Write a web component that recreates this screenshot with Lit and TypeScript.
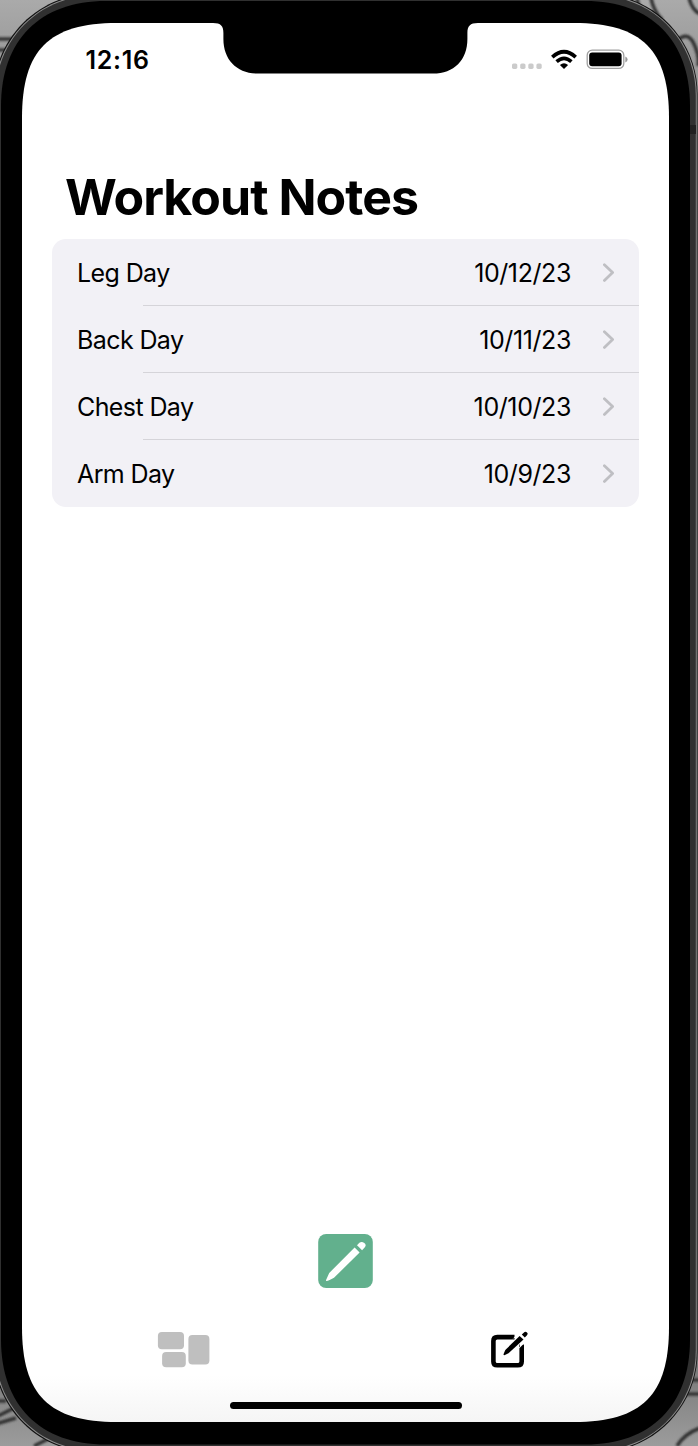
import { LitElement, html, css, svg } from "lit";
import { customElement, property } from "lit/decorators.js";

interface Note {
  title: string;
  date: string;
}

const NOTES: Note[] = [
  { title: "Leg Day", date: "10/12/23" },
  { title: "Back Day", date: "10/11/23" },
  { title: "Chest Day", date: "10/10/23" },
  { title: "Arm Day", date: "10/9/23" },
];

/** Continuous-curvature rounded rectangle: l is the corner length, a the handle inset. */
function squircle(x0: number, y0: number, x1: number, y1: number, l: number, a: number): string {
  return `M${x0} ${y0 + l}C${x0} ${y0 + a} ${x0 + a} ${y0} ${x0 + l} ${y0}H${x1 - l}
    C${x1 - a} ${y0} ${x1} ${y0 + a} ${x1} ${y0 + l}V${y1 - l}
    C${x1} ${y1 - a} ${x1 - a} ${y1} ${x1 - l} ${y1}H${x0 + l}
    C${x0 + a} ${y1} ${x0} ${y1 - a} ${x0} ${y1 - l}Z`;
}

@customElement("phone-frame")
export class PhoneFrame extends LitElement {
  static styles = css`
    :host { display: block; }
    svg { display: block; }
  `;
  render() {
    return html`<svg width="698" height="1446" viewBox="0 0 698 1446">
      <defs>
        <linearGradient id="wall" x1="0" y1="0" x2="0" y2="1">
          <stop offset="0" stop-color="#aaa" />
          <stop offset="0.04" stop-color="#9a9a9a" />
          <stop offset="0.95" stop-color="#7c7c7c" />
          <stop offset="1" stop-color="#9c9c9c" />
        </linearGradient>
        <linearGradient id="glass" x1="0" y1="1375" x2="0" y2="1422" gradientUnits="userSpaceOnUse">
          <stop offset="0" stop-color="#fff" />
          <stop offset="1" stop-color="#f5f5f5" />
        </linearGradient>
        <filter id="soft"><feGaussianBlur stdDeviation="1" /></filter>
      </defs>
      <rect width="698" height="1446" fill="url(#wall)" />
      <g fill="none" stroke="#303030" stroke-width="3.5" filter="url(#soft)">
        <path d="M-2 39H14M-2 50H10M637 -2Q638 9 646 16M651 -2Q653 10 662 20M689 -2Q692 10 700 14" />
        <path d="M678 40Q688 31 694 44T698 66M-2 1401H6M-2 1416L14 1408M-4 1424L16 1418M34 1446L50 1438" />
        <path d="M686 1380H700M682 1394H700M677 1446Q684 1434 700 1428" />
      </g>
      <path d=${squircle(-6.5, -6.5, 697.6, 1452.5, 101, 45)} fill="#111" />
      <path d=${squircle(-5.5, -5.5, 696.8, 1451.5, 100, 45)} fill="#8c8c8c" />
      <path d=${squircle(-4.5, -4.5, 695.8, 1450.5, 100, 44)} fill="#303030" />
      <path d="M690 125H696V134H690Z" fill="#202020" />
      <path d=${squircle(1, 1, 690, 1444.5, 105, 39)} fill="#000" />
      <path d=${squircle(22, 23, 669, 1422, 95, 27)} fill="url(#glass)" />
      <path d="M213 22V23C221 23 223.4 26 223.4 33V39C223.4 60 237 73.6 258 73.6H433C454 73.6 467.4 60 467.4 39V33C467.4 26 470 23 478 23V22Z" fill="#000" />
    </svg>`;
  }
}

@customElement("status-bar")
export class StatusBar extends LitElement {
  static styles = css`
    :host {
      display: flex;
      justify-content: space-between;
      align-items: center;
      height: 30px;
      padding: 22px 40px 0 63.5px;
    }
    .time {
      font: 600 25px/30px Inter, "Liberation Sans", sans-serif;
      letter-spacing: 0.7px;
    }
    svg { display: block; margin-bottom: 2px; }
  `;
  render() {
    return html`<span class="time">12:16</span>
      <svg width="118" height="22" viewBox="511 48 118 22">
        <g fill="#cbcbcb">
          ${[512, 520.2, 528.3, 536.4].map((x) => svg`<rect x=${x} y="63.4" width="5.3" height="5.5" rx="1.6" />`)}
        </g>
        <g fill="none" stroke="#000" stroke-width="3.7">
          <path d="M552.3 57.1Q564 46.5 575.7 57.1" />
          <path d="M556.6 61.6Q564 55.1 571.4 61.6" />
        </g>
        <path d="M559.9 65Q564 61.6 568.1 65L564 69Z" />
        <rect x="587.2" y="50.2" width="36.6" height="18.2" rx="5" fill="none" stroke="#a0a0a0" stroke-width="1.3" />
        <rect x="589.2" y="52.6" width="32.4" height="13.6" rx="3" />
        <path d="M625.3 56.6Q627.6 57.5 627.6 59.5T625.3 62.4Z" fill="#999" />
      </svg>`;
  }
}

@customElement("note-row")
export class NoteRow extends LitElement {
  @property() title = "";
  @property() date = "";
  static styles = css`
    :host {
      display: flex;
      align-items: center;
      height: 67px;
      padding: 0 24px 0 25px;
      font: 400 25px/32px Inter, "Liberation Sans", sans-serif;
      box-sizing: border-box;
      letter-spacing: -0.6px;
    }
    .title { flex: 1; }
    .date { letter-spacing: -0.4px; }
    svg { display: block; margin-left: 31px; }
  `;
  render() {
    return html`<span class="title">${this.title}</span>
      <span class="date">${this.date}</span>
      <svg width="13" height="20" viewBox="0 0 13 20">
        <path d="M2.4 1.8L10.6 9.6L2.4 17.4" fill="none" stroke="#bfbfc3" stroke-width="2.8" stroke-linecap="round" stroke-linejoin="round" />
      </svg>`;
  }
}

@customElement("app-root")
export class AppRoot extends LitElement {
  static styles = css`
    :host {
      display: block;
      position: relative;
      width: 698px;
      height: 1446px;
      overflow: hidden;
      color: #000;
    }
    .frame { position: absolute; inset: 0; }
    .screen {
      position: relative;
      display: flex;
      flex-direction: column;
      box-sizing: border-box;
      height: 1446px;
      padding: 23px 29px 24px 22px;
    }
    h1 {
      margin: 92px 0 0 43px;
      font: 700 50px/60px Inter, "Liberation Sans", sans-serif;
      letter-spacing: -0.95px;
      white-space: nowrap;
    }
    .list {
      margin: 12px 30px 0 30px;
      border-radius: 14px;
      background: #f2f1f6;
      overflow: hidden;
    }
    .row:not(:last-child) {
      background: linear-gradient(#d5d4d9, #d5d4d9) 91px 66px / 100% 1px no-repeat;
    }
    .spacer { flex: 1; }
    .add { align-self: center; display: block; }
    .tabs {
      display: flex;
      justify-content: space-between;
      align-items: center;
      height: 38px;
      margin: 42px 140px 0 135px;
    }
    .tabs svg { display: block; }
    .home {
      align-self: center;
      width: 232px;
      height: 7px;
      margin: 33px 0 13px;
      border-radius: 4px;
      background: #000;
    }
  `;
  render() {
    return html`
      <phone-frame class="frame"></phone-frame>
      <main class="screen">
        <status-bar></status-bar>
        <h1>Workout Notes</h1>
        <div class="list">
          ${NOTES.map((n) => html`<note-row class="row" .title=${n.title} .date=${n.date}></note-row>`)}
        </div>
        <div class="spacer"></div>
        <svg class="add" width="55" height="55" viewBox="318 1234 55 55">
          <rect x="318.2" y="1234" width="54.6" height="54" rx="8" fill="#62b08d" />
          <g fill="#fff">
            <path d="M354.6 1247.6L359.6 1252.6L334 1277.8Q329 1280.8 326.4 1281Q325.6 1280.6 326.3 1279.4L329.2 1273Z" />
            <path d="M357 1245.2L359.4 1242.8Q361.7 1240.9 364.3 1243T364.6 1247.6L362.1 1250.2Z" />
          </g>
        </svg>
        <nav class="tabs">
          <svg width="54" height="38" viewBox="157 1331 54 38">
            <g fill="#bfbfbf">
              <rect x="157.9" y="1332" width="26.1" height="17.2" rx="4" />
              <rect x="162.1" y="1352" width="23.7" height="15.2" rx="4" />
              <rect x="188.4" y="1335" width="21" height="29.6" rx="4" />
            </g>
          </svg>
          <svg width="39" height="38" viewBox="490 1331 39 38">
            <path fill="none" stroke="#000" stroke-width="4.6" d="M514.5 1337.1H497.3Q493.4 1337.1 493.4 1341V1361.4Q493.4 1365.3 497.3 1365.3H517.8Q521.7 1365.3 521.7 1361.4V1344.5" />
            <path fill="#fff" d="M511.5 1340L517.6 1334H520V1347H519L519.3 1348.3L525 1342.6V1338H514Z" />
            <path d="M519.6 1336L523.5 1339.5L508.5 1353.2L504.4 1355.3Q503.2 1355.3 503.6 1354L505.3 1350Z" />
            <path d="M521.8 1334.6L524 1332.4Q525.5 1331.2 527 1332.6T527 1335.2L524.8 1337.4Z" />
          </svg>
        </nav>
        <div class="home"></div>
      </main>
    `;
  }
}
